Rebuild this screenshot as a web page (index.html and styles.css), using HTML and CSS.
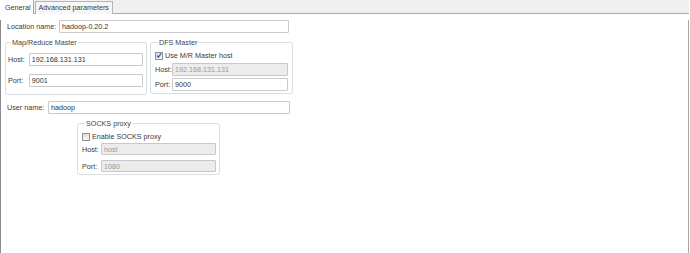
FILE: index.html
```html
<!DOCTYPE html>
<html lang="en">
<head>
  <meta charset="UTF-8" />
  <title>Hadoop location</title>
  <link rel="stylesheet" href="styles.css">
</head>
<body>

  <div class="tabs">
    <div class="tab active">General</div>
    <div class="tab">Advanced parameters</div>
  </div>

  <div class="panel">
    <div class="row loc-row">
      <label class="lbl loc-lbl">Location name:</label>
      <input class="field loc-field" type="text" value="hadoop-0.20.2">
    </div>

    <div class="groups">
      <fieldset class="group mr-group">
        <legend>Map/Reduce Master</legend>
        <div class="row mr-host">
          <label class="lbl mr-lbl">Host:</label>
          <input class="field mr-field" type="text" value="192.168.131.131">
        </div>
        <div class="row mr-port">
          <label class="lbl mr-lbl">Port:</label>
          <input class="field mr-field" type="text" value="9001">
        </div>
      </fieldset>

      <fieldset class="group dfs-group">
        <legend>DFS Master</legend>
        <div class="row check-row dfs-check">
          <span class="box checked">
            <svg width="7" height="7" viewBox="0 0 7 7"><path d="M1 3.5 L2.8 5.5 L6 1" fill="none" stroke="#2a5cc8" stroke-width="1.4"/></svg>
          </span>
          <span>Use M/R Master host</span>
        </div>
        <div class="row dfs-host">
          <label class="lbl dfs-lbl">Host:</label>
          <input class="field dfs-field" type="text" value="192.168.131.131" disabled>
        </div>
        <div class="row dfs-port">
          <label class="lbl dfs-lbl">Port:</label>
          <input class="field dfs-field" type="text" value="9000">
        </div>
      </fieldset>
    </div>

    <div class="row user-row">
      <label class="lbl user-lbl">User name:</label>
      <input class="field user-field" type="text" value="hadoop">
    </div>

    <fieldset class="group socks-group">
      <legend>SOCKS proxy</legend>
      <div class="row check-row socks-check">
        <span class="box"></span>
        <span>Enable SOCKS proxy</span>
      </div>
      <div class="row socks-host">
        <label class="lbl socks-lbl">Host:</label>
        <input class="field socks-field" type="text" value="host" disabled>
      </div>
      <div class="row socks-port">
        <label class="lbl socks-lbl">Port:</label>
        <input class="field socks-field" type="text" value="1080" disabled>
      </div>
    </fieldset>
  </div>

</body>
</html>
```

FILE: styles.css
```css
body {
  margin: 0;
  width: 689px;
  font-family: "Liberation Sans", Arial, sans-serif;
  font-size: 7.2px;
  color: #3a3a3a;
  background: #fff;
}
.tabs {
  display: flex;
  height: 13px;
  background: #f0f0f0;
  border-bottom: 1px solid #a9a9a9;
}
.tab {
  height: 12px;
  line-height: 12px;
  padding: 0 3px;
  margin-top: 1px;
  border: 1px solid #b4b4b4;
  border-bottom: none;
  background: #f6f6f6;
  margin-left: 1px;
}
.tab.active {
  height: 14px;
  margin-top: -1px;
  padding: 0 2px 0 4px;
  line-height: 15px;
  margin-left: 0;
  background: #fff;
  border-color: #a9a9a9;
  border-left-color: #fff;
  position: relative;
  z-index: 1;
}
.panel {
  height: 238px;
  border: 1px solid #a9a9a9;
  border-left-color: #8c8c8c;
  border-top: none;
  padding-left: 4px;
}
.row {
  display: flex;
  align-items: center;
}
.lbl {
  white-space: nowrap;
}
.field {
  box-sizing: border-box;
  height: 13px;
  padding: 0 2px;
  margin: 0;
  border: 1px solid #cacaca;
  border-radius: 1px;
  font-family: inherit;
  font-size: 7.2px;
  color: #333;
  background: #fff;
  outline: none;
}
.field:disabled {
  background: #ececec;
  color: #9a9a9a;
  border-color: #c8c8c8;
}
.loc-row {
  margin-top: 6px;
  padding-left: 2px;
}
.loc-lbl {
  width: 52px;
}
.loc-field {
  width: 230px;
}

.groups {
  display: flex;
  align-items: flex-start;
  gap: 3px;
  margin-top: 5px;
}
.group {
  margin: 0;
  border: 1px solid #d9dee3;
  border-radius: 3px;
  min-width: 0;
}
.group legend {
  padding: 0 1px;
  margin-left: 3px;
  line-height: 9px;
  color: #444;
}
.mr-group {
  width: 142px;
  box-sizing: border-box;
  padding: 0 3px 7px 2px;
}
.mr-lbl {
  width: 21px;
}
.mr-field {
  width: 116px;
}
.mr-host {
  margin-top: 6px;
}
.mr-port {
  margin-top: 8px;
}

.dfs-group {
  width: 143px;
  box-sizing: border-box;
  padding: 0 4px 2px 4px;
}
.check-row {
  height: 9px;
  gap: 2px;
}
.box {
  box-sizing: border-box;
  width: 8px;
  height: 8px;
  border: 1px solid #8e8f8f;
  background: linear-gradient(#dedede, #f7f7f7);
  display: flex;
  align-items: center;
  justify-content: center;
}
.box svg {
  display: block;
}
.dfs-check {
  margin-top: 4px;
}
.dfs-lbl {
  width: 17px;
}
.dfs-field {
  width: 116px;
}
.dfs-host {
  margin-top: 3px;
}
.dfs-port {
  margin-top: 2px;
}

.user-row {
  margin-top: 6px;
  padding-left: 2px;
}
.user-lbl {
  width: 41px;
}
.user-field {
  width: 242px;
}

.socks-group {
  width: 143px;
  box-sizing: border-box;
  margin: 5px 0 0 72px;
  padding: 0 3px 2px 4px;
}
.socks-check {
  margin-top: 4px;
}
.socks-lbl {
  width: 19px;
}
.socks-field {
  width: 115px;
  height: 12px;
}
.socks-host {
  margin-top: 2px;
}
.socks-port {
  margin-top: 5px;
}
```
